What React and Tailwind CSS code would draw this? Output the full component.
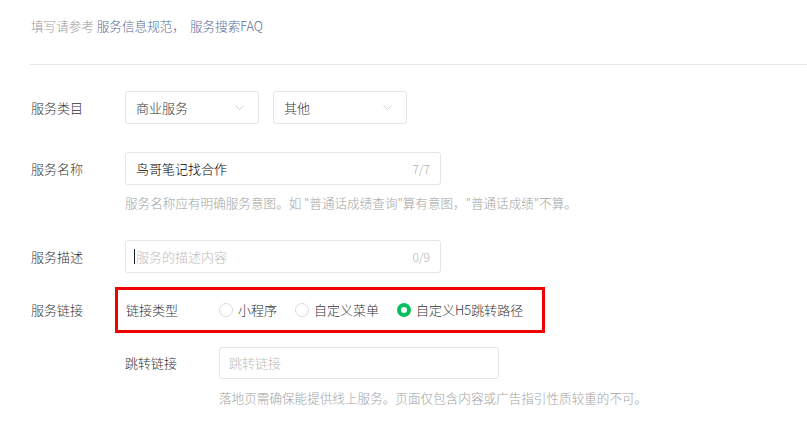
import React from 'react'

const FONT = '"Noto Sans CJK SC", "Noto Sans", "Liberation Sans", sans-serif'

function Chevron() {
  return (
    <svg width="9" height="5" viewBox="0 0 9 5" fill="none">
      <path d="M0.5 0.5 L4.5 4.5 L8.5 0.5" stroke="#d2d2d2" strokeWidth="1" />
    </svg>
  )
}

function Select({ value }) {
  return (
    <div className="flex h-[33px] w-[134px] items-center justify-between rounded-[3px] border border-[#e5e5e5] pl-[10px] pr-[14px] text-[13px] text-[#353535]">
      <span>{value}</span>
      <Chevron />
    </div>
  )
}

function Radio({ checked, label }) {
  return (
    <label className="flex items-center gap-[5px]">
      {checked ? (
        <span className="box-border h-[14px] w-[14px] rounded-full border-[4px] border-[#07c160] bg-white" />
      ) : (
        <span className="box-border h-[14px] w-[14px] rounded-full border border-[#d9d9d9] bg-white" />
      )}
      <span>{label}</span>
    </label>
  )
}

function Row({ label, children, className = '' }) {
  return (
    <div className={`flex items-center ${className}`}>
      <div className="w-[94px] shrink-0 text-[13px] text-[#353535]">{label}</div>
      {children}
    </div>
  )
}

export default function App() {
  return (
    <div
      className="h-[426px] w-[807px] overflow-hidden bg-white font-light"
      style={{ fontFamily: FONT }}
    >
      <div className="pl-[31px] pt-[18px] text-[12.6px] leading-[16px] text-[#9a9a9a]">
        填写请参考 <span className="text-[#576b95]">服务信息规范，</span>
        <span className="ml-[5px] text-[#576b95]">服务搜索FAQ</span>
      </div>
      <div className="ml-[30px] mt-[30px] h-px bg-[#e7e7e7]" />

      <div className="pl-[31px]">
        <Row label="服务类目" className="mt-[26px]">
          <div className="flex gap-[14px]">
            <Select value="商业服务" />
            <Select value="其他" />
          </div>
        </Row>

        <Row label="服务名称" className="mt-[28px]">
          <div className="flex h-[33px] w-[316px] items-center justify-between rounded-[3px] border border-[#e5e5e5] pl-[10px] pr-[10px] text-[13px]">
            <span className="text-black">鸟哥笔记找合作</span>
            <span className="text-[12px] text-[#b2b2b2]">7/7</span>
          </div>
        </Row>
        <div className="ml-[94px] mt-[10px] text-[12.6px] leading-[16px] text-[#a3a3a3]">
          服务名称应有明确服务意图。如 "普通话成绩查询"算有意图，"普通话成绩"不算。
        </div>

        <Row label="服务描述" className="mt-[29px]">
          <div className="flex h-[33px] w-[316px] items-center justify-between rounded-[3px] border border-[#e5e5e5] pl-[8px] pr-[10px] text-[13px]">
            <span className="flex items-center text-[#bdbdbd]">
              <span className="mr-px h-[15px] w-px bg-[#1a1a1a]" />
              服务的描述内容
            </span>
            <span className="text-[12px] text-[#b2b2b2]">0/9</span>
          </div>
        </Row>

        <Row label="服务链接" className="mt-[14px]">
          <div className="-ml-[10px] flex h-[46px] w-[430px] items-center border-[3px] border-[#f00000] pl-[8px] text-[13px] text-[#353535]">
            <div className="w-[93px] shrink-0">链接类型</div>
            <div className="flex items-center gap-[18px]">
              <Radio label="小程序" />
              <Radio label="自定义菜单" />
              <Radio checked label="自定义H5跳转路径" />
            </div>
          </div>
        </Row>

        <div className="ml-[94px] mt-[14px] flex items-center">
          <div className="w-[94px] shrink-0 text-[13px] text-[#353535]">跳转链接</div>
          <div className="flex h-[32px] w-[280px] items-center rounded-[3px] border border-[#e5e5e5] pl-[9px] text-[13px] text-[#bdbdbd]">
            跳转链接
          </div>
        </div>
        <div className="ml-[188px] mt-[11px] text-[12.6px] leading-[16px] text-[#a3a3a3]">
          落地页需确保能提供线上服务。页面仅包含内容或广告指引性质较重的不可。
        </div>
      </div>
    </div>
  )
}
